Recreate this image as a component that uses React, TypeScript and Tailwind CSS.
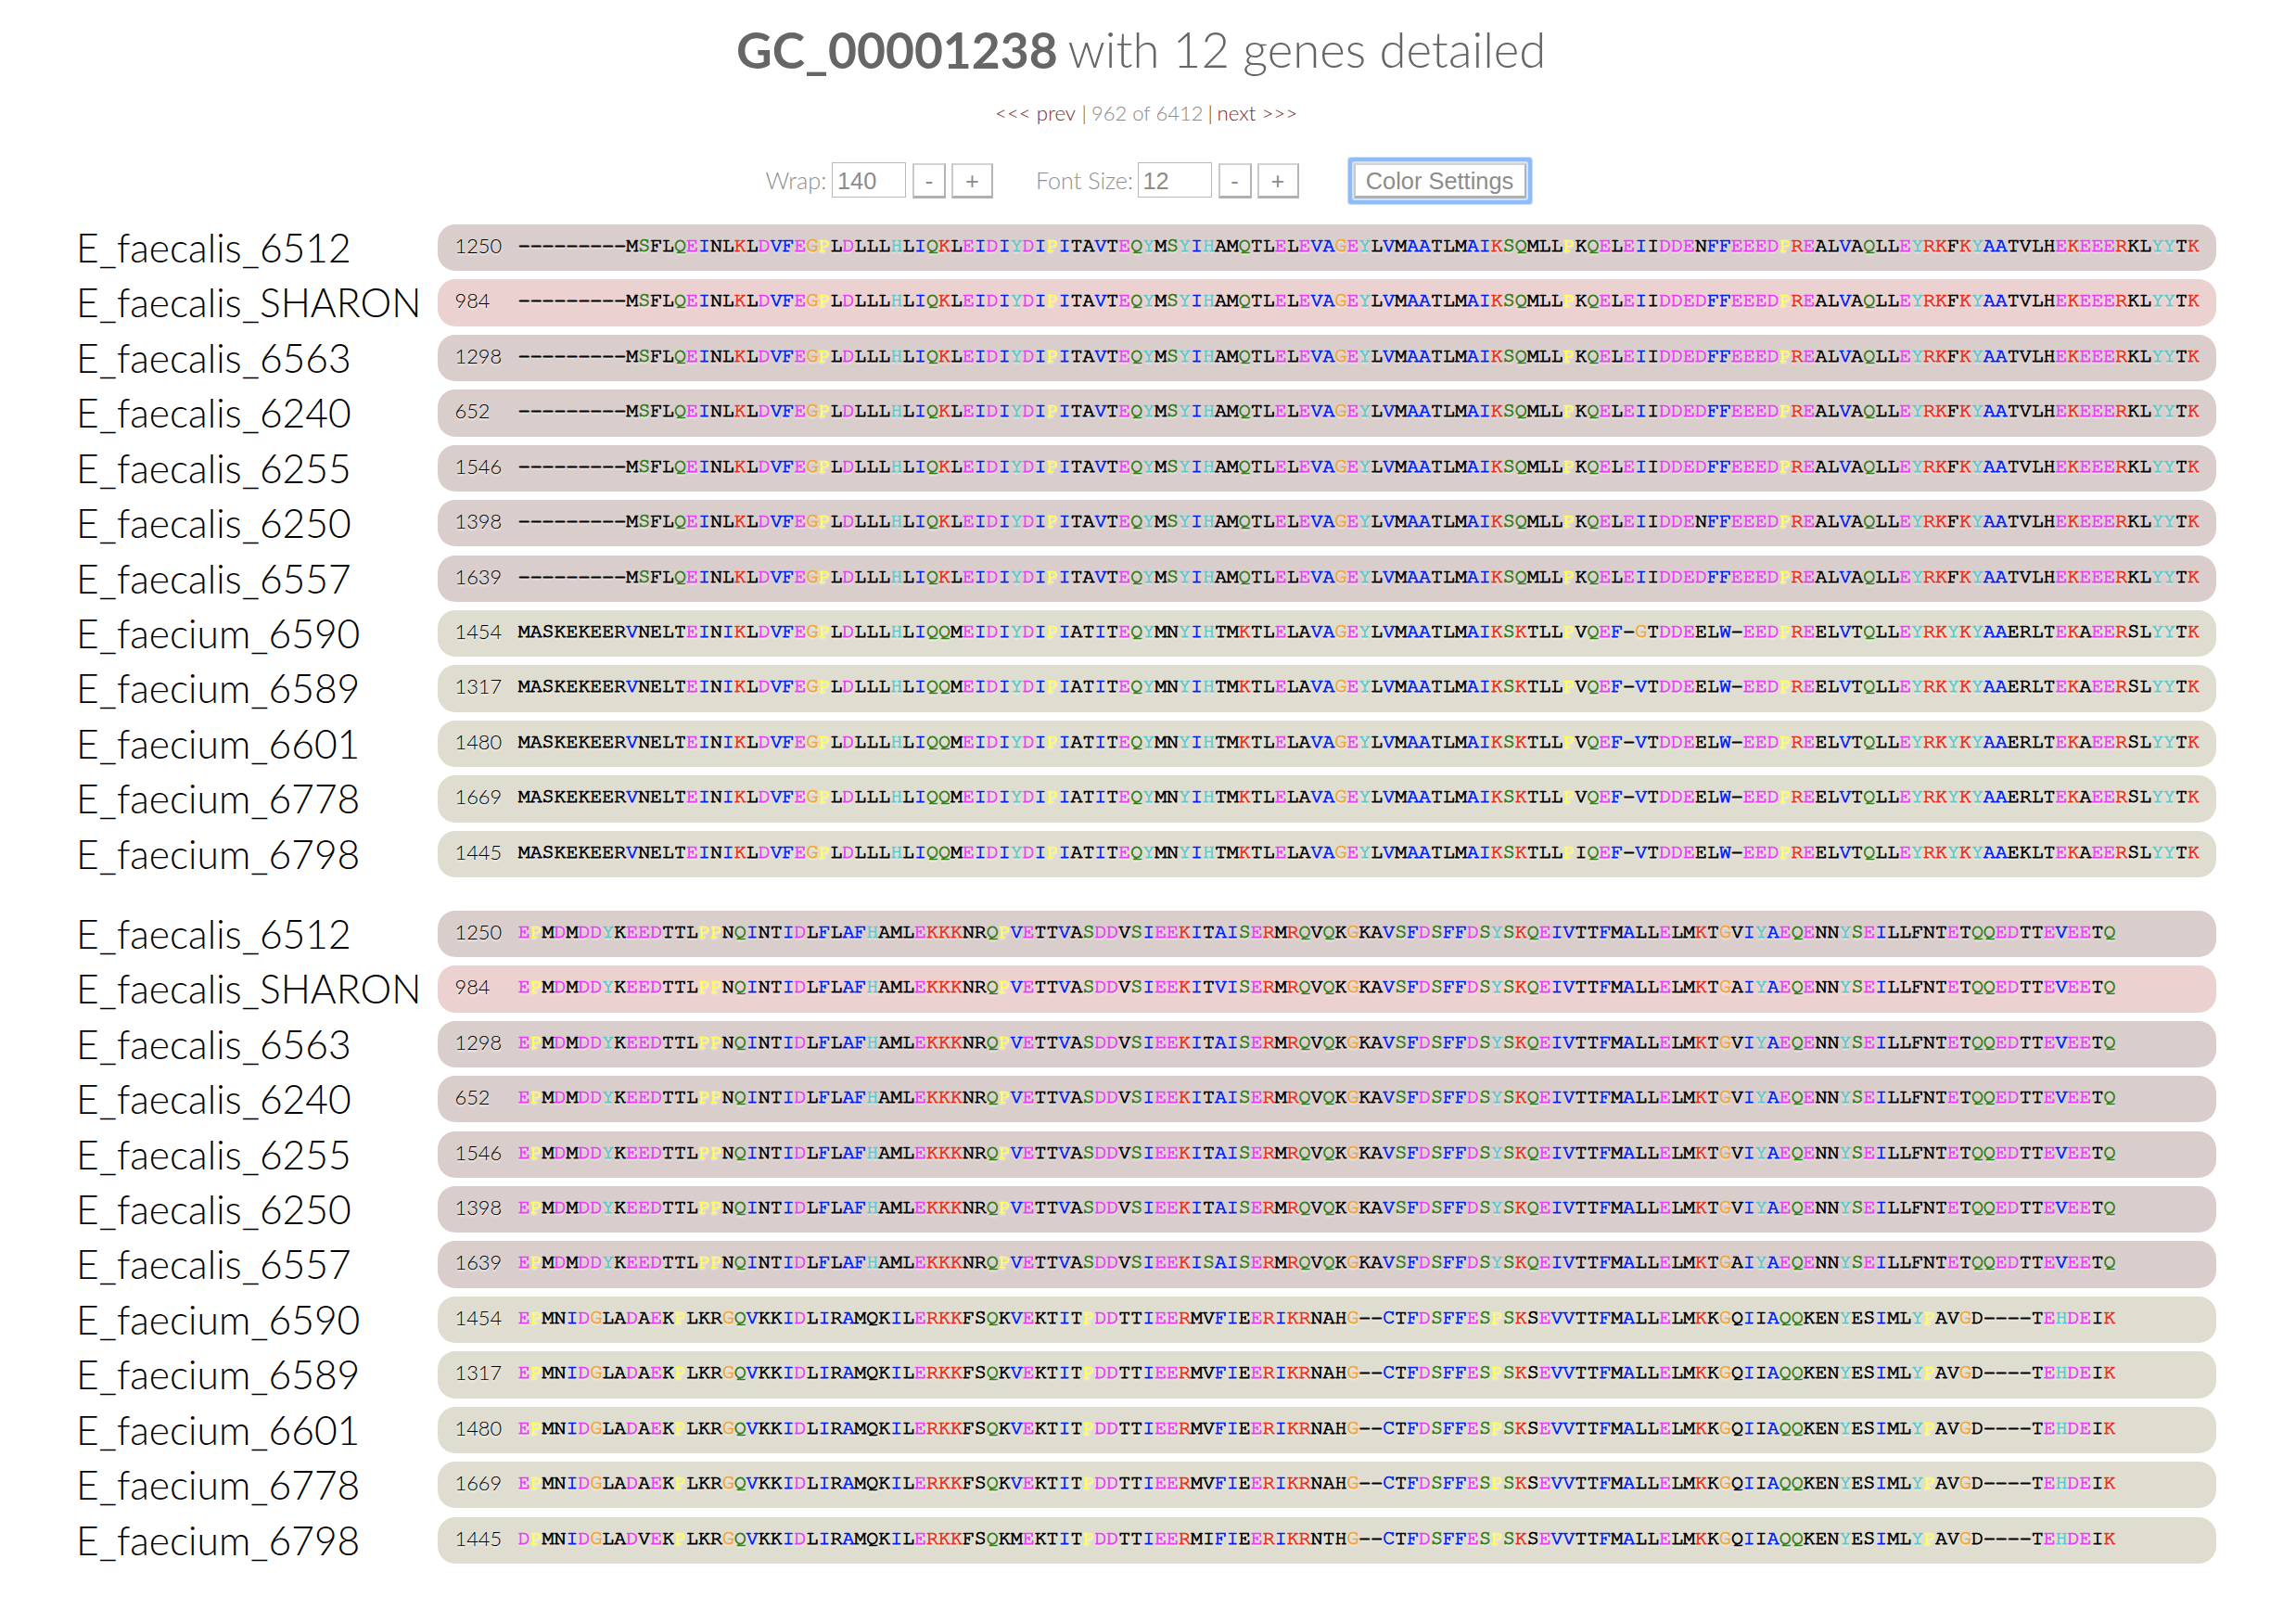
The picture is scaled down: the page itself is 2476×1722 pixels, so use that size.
import type { ReactNode } from "react";

type Group = "faecalis" | "sharon" | "faecium";
type Genome = { name: string; gene: string; group: Group; blocks: [string, string] };

// Residues in upper case are conserved and take their class colour;
// residues in lower case are drawn in black.
const FAECALIS_A = "---------mSflQEInlKlDVFEGPlDlllHlIQKlEIDIYDIPItaVtEQYmSYIHamQtlElEVAGEYlVmAAtlmAIKSQmllPkQElEIiDDEDFFEEEDPREalVaQllEYRKfKYAAtvlhEKEEERklYYtK";
const FAECALIS_A_N = "---------mSflQEInlKlDVFEGPlDlllHlIQKlEIDIYDIPItaVtEQYmSYIHamQtlElEVAGEYlVmAAtlmAIKSQmllPkQElEIiDDEnFFEEEDPREalVaQllEYRKfKYAAtvlhEKEEERklYYtK";
const FAECIUM_A = "maskekeerVneltEInIKlDVFEGPlDlllHlIQQmEIDIYDIPIatItEQYmnYIHtmKtlElaVAGEYlVmAAtlmAIKSKtllPvQEF-VtDDEelW-EEDPREelVtQllEYRKYKYAAerltEKaEERslYYtK";
const FAECIUM_A_G = "maskekeerVneltEInIKlDVFEGPlDlllHlIQQmEIDIYDIPIatItEQYmnYIHtmKtlElaVAGEYlVmAAtlmAIKSKtllPvQEF-GtDDEelW-EEDPREelVtQllEYRKYKYAAerltEKaEERslYYtK";
const FAECIUM_A_I = "maskekeerVneltEInIKlDVFEGPlDlllHlIQQmEIDIYDIPIatItEQYmnYIHtmKtlElaVAGEYlVmAAtlmAIKSKtllPiQEF-VtDDEelW-EEDPREelVtQllEYRKYKYAAekltEKaEERslYYtK";
const FAECALIS_B = "EPmDmDDYkEEDttlPPnQIntIDlFlAFHamlEKKKnrQPVEttVaSDDvSIEEKItAISERmRQvQkGkaVSFDSFFDSYSKQEIVttFmAllElmKtGvIYAEQEnnYSEIllfntEtQQEDttEVEEtQ";
const FAECALIS_B_SHARON = "EPmDmDDYkEEDttlPPnQIntIDlFlAFHamlEKKKnrQPVEttVaSDDvSIEEKItVISERmRQvQkGkaVSFDSFFDSYSKQEIVttFmAllElmKtGaIYAEQEnnYSEIllfntEtQQEDttEVEEtQ";
const FAECALIS_B_6557 = "EPmDmDDYkEEDttlPPnQIntIDlFlAFHamlEKKKnrQPVEttVaSDDvSIEEKISAISERmRQvQkGkaVSFDSFFDSYSKQEIVttFmAllElmKtGaIYAEQEnnYSEIllfntEtQQEDttEVEEtQ";
const FAECIUM_B = "EPmnIDGlaDaEkPlkrGQVkkIDlIrAmqkIlERKKfsQkVEktItPDDttIEERmvFIeERIKRnahG--CtFDSFFESPSKsEVVttFmAllElmKkGqIiAQQkenYesImlYPavGd----tEHDEiK";
const FAECIUM_B_6798 = "DPmnIDGlaDvEkPlkrGQVkkIDlIrAmqkIlERKKfsQkmEktItPDDttIEERmiFIeERIKRnthG--CtFDSFFESPSKsEVVttFmAllElmKkGqIiAQQkenYesImlYPavGd----tEHDEiK";

const GENOMES: Genome[] = [
  { name: "E_faecalis_6512", gene: "1250", group: "faecalis", blocks: [FAECALIS_A_N, FAECALIS_B] },
  { name: "E_faecalis_SHARON", gene: "984", group: "sharon", blocks: [FAECALIS_A, FAECALIS_B_SHARON] },
  { name: "E_faecalis_6563", gene: "1298", group: "faecalis", blocks: [FAECALIS_A, FAECALIS_B] },
  { name: "E_faecalis_6240", gene: "652", group: "faecalis", blocks: [FAECALIS_A, FAECALIS_B] },
  { name: "E_faecalis_6255", gene: "1546", group: "faecalis", blocks: [FAECALIS_A, FAECALIS_B] },
  { name: "E_faecalis_6250", gene: "1398", group: "faecalis", blocks: [FAECALIS_A_N, FAECALIS_B] },
  { name: "E_faecalis_6557", gene: "1639", group: "faecalis", blocks: [FAECALIS_A, FAECALIS_B_6557] },
  { name: "E_faecium_6590", gene: "1454", group: "faecium", blocks: [FAECIUM_A_G, FAECIUM_B] },
  { name: "E_faecium_6589", gene: "1317", group: "faecium", blocks: [FAECIUM_A, FAECIUM_B] },
  { name: "E_faecium_6601", gene: "1480", group: "faecium", blocks: [FAECIUM_A, FAECIUM_B] },
  { name: "E_faecium_6778", gene: "1669", group: "faecium", blocks: [FAECIUM_A, FAECIUM_B] },
  { name: "E_faecium_6798", gene: "1445", group: "faecium", blocks: [FAECIUM_A_I, FAECIUM_B_6798] },
];

const GROUP_BG: Record<Group, string> = {
  faecalis: "bg-[#d9cecc]",
  sharon: "bg-[#ebd1d0]",
  faecium: "bg-[#dfddd0]",
};

function residueClass(ch: string): string {
  if ("AVIFWC".includes(ch)) return "text-[#0023f5]";
  if ("KR".includes(ch)) return "text-[#ea3323]";
  if ("DE".includes(ch)) return "text-[#ea3ff7]";
  if ("SQ".includes(ch)) return "text-[#377e22]";
  if ("HY".includes(ch)) return "text-[#5fc9cb]";
  if (ch === "G") return "text-[#f2a73b]";
  if (ch === "P") return "text-[#fffe54]";
  if (ch === "-") return "text-black [-webkit-text-stroke:1.3px_currentColor]";
  return "text-black";
}

function Sequence({ value }: { value: string }) {
  const runs: { cls: string; text: string }[] = [];
  for (const ch of value) {
    const cls = residueClass(ch);
    const last = runs[runs.length - 1];
    if (last && last.cls === cls) last.text += ch.toUpperCase();
    else runs.push({ cls, text: ch.toUpperCase() });
  }
  return (
    <span className="whitespace-pre font-[FreeMono,'Liberation_Mono',monospace] text-[21.58px] leading-[46px] [-webkit-text-stroke:0.8px_currentColor] [text-shadow:0_2px_2px_rgba(255,255,255,0.75)]">
      {runs.map((r, i) => (
        <span key={i} className={r.cls}>{r.text}</span>
      ))}
    </span>
  );
}

function AlignmentBlock({ index }: { index: 0 | 1 }) {
  return (
    <section className="flex flex-col">
      {GENOMES.map((g) => (
        <div key={g.name} className="flex h-[59.43px] items-start">
          <div className="w-[390px] shrink-0 text-[42.6px] leading-[50px] text-black">{g.name}</div>
          <div className={`flex h-[50.3px] w-[1918px] items-start rounded-[19px] pl-[18.5px] ${GROUP_BG[g.group]}`}>
            <span className="w-[68.2px] shrink-0 text-[21.8px] leading-[45px] text-black [text-shadow:0_2px_2px_rgba(255,255,255,0.75)]">{g.gene}</span>
            <Sequence value={g.blocks[index]} />
          </div>
        </div>
      ))}
    </section>
  );
}

const BEVEL = "h-[38px] border-2 border-t-[#d2d2d2] border-l-[#c8c8c8] border-r-[#b4b4b4] border-b-[#b0b0b0] border-b-[3px] bg-white font-['Liberation_Sans',Arial,sans-serif] text-[25.4px] leading-[34px] text-[#8c8c8c]";

function StepButton({ className, children }: { className: string; children: ReactNode }) {
  return <button className={`${BEVEL} shrink-0 ${className}`}>{children}</button>;
}

function NumberField({ value, className }: { value: string; className: string }) {
  return (
    <input
      defaultValue={value}
      className={`h-[38px] w-[80px] shrink-0 border border-[#b8b8b8] bg-white pt-[2px] pl-[5px] font-['Liberation_Sans',Arial,sans-serif] text-[25.4px] text-[#8c8c8c] outline-none ${className}`}
    />
  );
}

export default function App() {
  return (
    <main className="flex h-[1722px] w-[2476px] flex-col overflow-hidden bg-white font-[Lato,sans-serif] font-light">
      <h1 className="flex h-[107px] items-start whitespace-pre pl-[794px] text-[52.7px] leading-[106px] text-[#666]">
        <b className="w-[357.5px] shrink-0 text-[53.4px] font-bold">GC_00001238</b>
        <span>with 12 genes detailed</span>
      </h1>
      <nav className="flex h-[30px] items-start whitespace-pre pl-[1073px] text-[22.3px] leading-[30px] text-[#8a8a8a]">
        <a className="w-[93.5px] shrink-0 text-[#7c2a2a]">{"<<< prev"}</a>
        <span className="w-[10.5px] shrink-0 text-[#666]">|</span>
        <span className="w-[125.5px] shrink-0 text-[22px]">962 of 6412</span>
        <span className="w-[10px] shrink-0 text-[#7c2a2a]">|</span>
        <a className="text-[#7c2a2a]">{"next >>>"}</a>
      </nav>
      <div className="mt-[38px] flex h-[39px] items-start pl-[825.5px] text-[25.3px] leading-[39px] text-[#8f8f8f]">
        <label className="w-[71.5px] shrink-0">Wrap:</label>
        <NumberField value="140" className="mr-[7px]" />
        <StepButton className="mt-px mr-[6px] w-[36px]">-</StepButton>
        <StepButton className="mt-px mr-[46px] w-[45px]">+</StepButton>
        <label className="w-[109.5px] shrink-0 text-[25.1px]">Font Size:</label>
        <NumberField value="12" className="mr-[7px]" />
        <StepButton className="mt-px mr-[6px] w-[36px]">-</StepButton>
        <StepButton className="mt-px mr-[59px] w-[45px]">+</StepButton>
        <button className={`${BEVEL} mt-px w-[186px] shrink-0 rounded-[1px] [box-shadow:0_0_0_2px_#cfe3fb,0_0_0_6px_#8fbcf8,0_0_0_7px_#c9dffb]`}>
          Color Settings
        </button>
      </div>
      <div className="mt-[28px] flex flex-col gap-[26.8px] pl-[82px]">
        <AlignmentBlock index={0} />
        <AlignmentBlock index={1} />
      </div>
    </main>
  );
}
